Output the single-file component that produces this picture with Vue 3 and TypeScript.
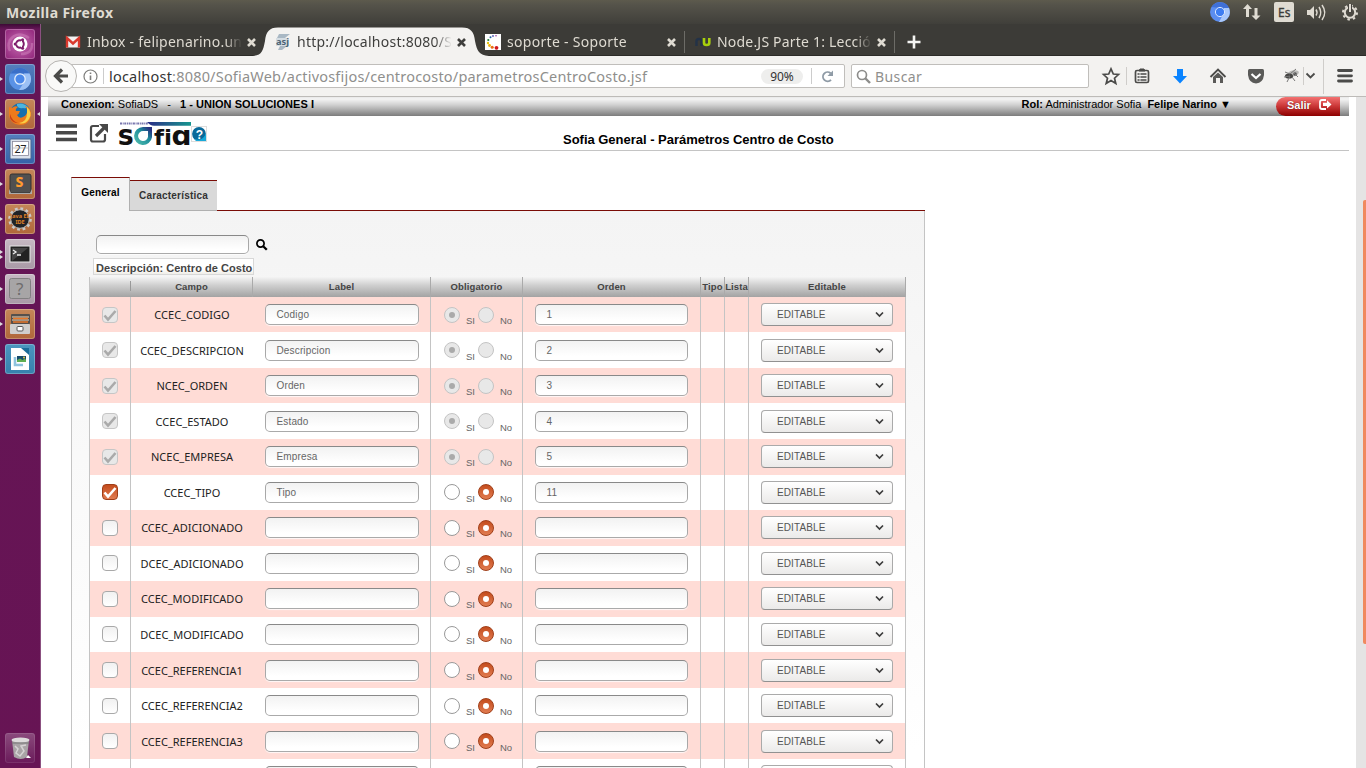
<script setup lang="ts">
interface Row {
  campo: string
  label: string
  orden: string
  state: 'locked' | 'on' | 'off'
}

const rows: Row[] = [
  { campo: 'CCEC_CODIGO', label: 'Codigo', orden: '1', state: 'locked' },
  { campo: 'CCEC_DESCRIPCION', label: 'Descripcion', orden: '2', state: 'locked' },
  { campo: 'NCEC_ORDEN', label: 'Orden', orden: '3', state: 'locked' },
  { campo: 'CCEC_ESTADO', label: 'Estado', orden: '4', state: 'locked' },
  { campo: 'NCEC_EMPRESA', label: 'Empresa', orden: '5', state: 'locked' },
  { campo: 'CCEC_TIPO', label: 'Tipo', orden: '11', state: 'on' },
  { campo: 'CCEC_ADICIONADO', label: '', orden: '', state: 'off' },
  { campo: 'DCEC_ADICIONADO', label: '', orden: '', state: 'off' },
  { campo: 'CCEC_MODIFICADO', label: '', orden: '', state: 'off' },
  { campo: 'DCEC_MODIFICADO', label: '', orden: '', state: 'off' },
  { campo: 'CCEC_REFERENCIA1', label: '', orden: '', state: 'off' },
  { campo: 'CCEC_REFERENCIA2', label: '', orden: '', state: 'off' },
  { campo: 'CCEC_REFERENCIA3', label: '', orden: '', state: 'off' },
  { campo: '', label: '', orden: '', state: 'off' },
]

const headers = ['', 'Campo', 'Label', 'Obligatorio', 'Orden', 'Tipo', 'Lista', 'Editable']

const launchers = [
  { id: 'home', tone: 'magenta', marks: 0 },
  { id: 'chromium', tone: 'blue', marks: 1 },
  { id: 'firefox', tone: 'orange', marks: 1 },
  { id: 'calendar', tone: 'blue', marks: 1 },
  { id: 'sublime', tone: 'orange', marks: 1 },
  { id: 'java', tone: 'orange', marks: 1 },
  { id: 'terminal', tone: 'grey', marks: 2 },
  { id: 'unknown', tone: 'grey', marks: 1 },
  { id: 'files', tone: 'orange', marks: 1 },
  { id: 'impress', tone: 'sky', marks: 1 },
  { id: 'trash', tone: 'clear', marks: 0 },
]
</script>

<template>
  <div class="desktop">
    <header class="panel">
      <span class="panel-title">Mozilla Firefox</span>
      <svg class="indicators" width="160" height="24" viewBox="1206 0 160 24">
        <circle cx="1220" cy="12" r="10" fill="#5b8def" />
        <path d="M1211.500 7A10 10 0 0 1 1229 8H1220Z" fill="#3f70d8" />
        <path d="M1229 8A10 10 0 0 1 1219 22L1224 13V8Z" fill="#a9c8fb" />
        <circle cx="1220" cy="12" r="4.600" fill="#3d7df2" stroke="#dbe8ff" stroke-width="1" />
        <path d="M1247.500 4L1252 9H1249V17H1246V9H1243ZM1256 20L1251.500 15.500H1254.500V8H1257.500V15.500H1260.500Z" fill="#dfdbd2" />
        <rect x="1274" y="2" width="20" height="20" rx="2" fill="#dfdbd2" />
        <text x="1278" y="16.500" font-size="12" textLength="12.500" fill="#3c3b37" stroke="#3c3b37" stroke-width=".3">Es</text>
        <path d="M1307 10H1310L1314 6V19L1310 15H1307Z" fill="#dfdbd2" />
        <path d="M1316 9.500Q1318 12.500 1316 15.500M1319 7Q1322.500 12.500 1319 18M1322 5Q1327.500 12.500 1322 20" fill="none" stroke="#dfdbd2" stroke-width="1.500" />
        <circle cx="1350" cy="12.500" r="5.200" fill="none" stroke="#dfdbd2" stroke-width="2" />
        <circle cx="1350" cy="12.500" r="7" fill="none" stroke="#dfdbd2" stroke-width="2" stroke-dasharray="2.500 3" />
        <path d="M1350 4V12.500" stroke="#45433e" stroke-width="4" />
        <path d="M1350 4V12" stroke="#dfdbd2" stroke-width="2" />
      </svg>
    </header>

    <div class="workspace">
      <nav class="launcher">
        <div v-for="item in launchers" :key="item.id" class="launch" :class="[item.id]">
          <span class="marks"><i v-for="m in item.marks" :key="m"></i></span>
          <svg width="30" height="30" viewBox="0 0 30 30" class="tile" :class="item.tone">
            <template v-if="item.id === 'home'">
              <path d="M4 12Q12 1 24 9M27 14Q28 25 16 25M5 22Q1 14 8 8" fill="none" stroke="#d88cc4" stroke-width="2.500" opacity=".45" />
              <circle cx="15" cy="15" r="7.500" fill="#fff" />
              <circle cx="15" cy="15" r="3.800" fill="none" stroke="#7d1c69" stroke-width="2" />
              <path d="M15 15L9.500 15M15 15L18 10M15 15L18 20" stroke="#fff" stroke-width="1" />
              <circle cx="10.200" cy="15" r="1.500" fill="#7d1c69" /><circle cx="17.600" cy="10.700" r="1.500" fill="#7d1c69" /><circle cx="17.600" cy="19.300" r="1.500" fill="#7d1c69" />
            </template>
            <template v-else-if="item.id === 'chromium'">
              <circle cx="15" cy="15" r="11" fill="#5a92e6" />
              <path d="M5.500 9.500A11 11 0 0 1 24.500 9.500H15Z" fill="#3a6fc8" />
              <path d="M24.500 9.500A11 11 0 0 1 14 26L20 17L19 9.500Z" fill="#9bc0f5" />
              <circle cx="15" cy="15" r="5.200" fill="#4a88ea" stroke="#e4eefc" stroke-width="1.300" />
            </template>
            <template v-else-if="item.id === 'firefox'">
              <circle cx="15.500" cy="14.500" r="10.500" fill="#176fae" />
              <path d="M12 5Q18 3 23 8Q21 10 18 9Q14 10 12 7Z" fill="#4bb5df" />
              <path d="M4 8L7 9Q10 6 13 8Q10 10 11 12H15Q14 15 12 16Q14 20 18 18Q23 16 22 10L20 7Q27 8 26 17Q24 26 15 26Q4 25 4 14Z" fill="#ee7a1c" />
              <path d="M22 8Q28 14 24 20Q20 26 14 24Q22 23 22 14Z" fill="#f9cf45" />
              <path d="M5 15Q7 22 13 24Q7 24 5 19Z" fill="#c94218" />
            </template>
            <template v-else-if="item.id === 'calendar'">
              <rect x="5" y="5" width="21" height="20" rx="1" fill="#dbe2ec" stroke="#49678f" />
              <rect x="7.500" y="7.500" width="16" height="14" fill="#fff" stroke="#889" stroke-width=".8" />
              <text x="9.500" y="18.500" font-size="11" textLength="12" fill="#222">27</text>
              <path d="M8 14H23" stroke="#999" stroke-width=".6" />
            </template>
            <template v-else-if="item.id === 'sublime'">
              <rect x="5" y="5" width="21" height="19" rx="2" fill="#505050" stroke="#333" />
              <path d="M4 20V25H27V20L25 24H6Z" fill="#aaa" />
              <text x="10.500" y="17.500" font-size="14" font-weight="800" fill="#ff9a2e">S</text>
            </template>
            <template v-else-if="item.id === 'java'">
              <circle cx="15" cy="15" r="10.300" fill="none" stroke="#c9c9c9" stroke-width="3" stroke-dasharray="2.700 2.700" />
              <circle cx="15" cy="15" r="9.300" fill="#202226" stroke="#bbb" stroke-width="1" />
              <text x="5.500" y="13.500" font-size="5.500" font-weight="700" textLength="19" lengthAdjust="spacingAndGlyphs" fill="#e08228">Java EE</text>
              <text x="10.500" y="19.500" font-size="5.500" font-weight="700" textLength="9" fill="#e08228">IDE</text>
            </template>
            <template v-else-if="item.id === 'terminal'">
              <rect x="5" y="7" width="20" height="16" fill="#222" stroke="#e8e8e8" />
              <path d="M7 22V9H23Z" fill="#444" />
              <path d="M8 11L11 13L8 15M12 16H16" fill="none" stroke="#eee" stroke-width="1.300" />
            </template>
            <template v-else-if="item.id === 'unknown'">
              <rect x="4.500" y="4.500" width="21" height="20" rx="2" fill="#a7a5a6" stroke="#818081" />
              <text x="11" y="20.500" font-size="17" fill="#6e6c6d">?</text>
            </template>
            <template v-else-if="item.id === 'files'">
              <rect x="6" y="5" width="19" height="10" rx="1" fill="#55504c" />
              <path d="M7 8H24M7 11H24" stroke="#f0d8bd" stroke-width="1" />
              <path d="M8 9.500H23M8 13H23" stroke="#e77729" stroke-width="1.600" />
              <rect x="5" y="15" width="20" height="10" rx="1" fill="#d0cfcd" />
              <rect x="12" y="17.500" width="6" height="4.500" rx="1" fill="#fff" stroke="#555" />
            </template>
            <template v-else-if="item.id === 'impress'">
              <path d="M6 4H18L24 10V26H6Z" fill="#fff" />
              <path d="M16 4H24V11Z" fill="#1b6c9a" />
              <path d="M10 13V21H18" fill="none" stroke="#8fc3de" stroke-width="2.600" />
              <rect x="12" y="12" width="9" height="6" fill="#164a6b" />
              <path d="M12 18V16L15 14.500L17.500 16L20 14.500L21 16V18Z" fill="#5fae52" /><circle cx="19" cy="13.500" r=".9" fill="#f9d649" />
            </template>
            <template v-else>
              <path d="M7 7L9 24Q16 28 22 24L24 7Z" fill="#a9a4a6" />
              <ellipse cx="15.500" cy="7" rx="9" ry="2.500" fill="#dedcdc" />
              <path d="M10 13L13 16L11 20L15 23L19 18L16 13L21 12" fill="none" stroke="#d6d3d4" stroke-width="1.500" />
              <path d="M7 10H24" stroke="#777" />
              <path d="M21 25L23 22L26 25Z" fill="#fff" />
            </template>
          </svg>
          <b v-if="item.id === 'firefox'" class="focus"></b>
        </div>
      </nav>

      <section class="browser">
        <div class="tabs">
          <div class="tab">
            <svg class="fav" width="16" height="16" viewBox="0 0 16 16">
              <rect x="1" y="2.500" width="14" height="11" fill="#f3f1f1" />
              <path d="M2 13.500V4L8 9.500L14 4V13.500" fill="none" stroke="#d9392e" stroke-width="2.400" />
            </svg>
            <span class="tab-title t1">Inbox - felipenarino.un</span>
            <svg class="close" width="9" height="9" viewBox="0 0 9 9"><path d="M1 1L8 8M8 1L1 8" /></svg>
          </div>
          <div class="tab active">
            <svg class="shape" width="236" height="29" viewBox="0 0 236 29">
              <path d="M0 29C9 28 10 24 12 14C13 5 16 .500 25 .500H209C218 .500 221 5 222 14C224 24 226 28 236 29Z" fill="#f3f2f0" />
            </svg>
            <svg class="fav" width="16" height="16" viewBox="0 0 16 16">
              <path d="M4 0H15L10 4H2ZM5 12H12L7 16H3Z" fill="#a9b8c4" />
              <rect x="1" y="4" width="13" height="8" fill="#d5dde3" />
              <text x="1" y="10.500" font-size="9" font-weight="700" textLength="13" lengthAdjust="spacingAndGlyphs" fill="#4c6475">asj</text>
            </svg>
            <span class="tab-title t2">http://localhost:8080/S</span>
            <svg class="close" width="9" height="9" viewBox="0 0 9 9"><path d="M1 1L8 8M8 1L1 8" /></svg>
          </div>
          <div class="tab ruled">
            <svg class="fav" width="16" height="16" viewBox="0 0 16 16">
              <rect width="16" height="16" fill="#fff" />
              <circle cx="11" cy="1.800" r=".8" fill="#93389c" /><circle cx="8" cy="2" r=".9" fill="#555bb5" /><circle cx="5.500" cy="3.300" r="1" fill="#2463a8" /><circle cx="3.300" cy="6" r="1.100" fill="#22803c" />
              <circle cx="3" cy="9" r="1.200" fill="#e3c313" /><circle cx="4.500" cy="11.500" r="1.400" fill="#f0b40c" /><circle cx="7.200" cy="13.300" r="1.500" fill="#e86b14" /><circle cx="11.500" cy="13.800" r="1.900" fill="#d0161c" />
            </svg>
            <span class="tab-title t3">soporte - Soporte</span>
            <svg class="close" width="9" height="9" viewBox="0 0 9 9"><path d="M1 1L8 8M8 1L1 8" /></svg>
          </div>
          <div class="tab ruled">
            <svg class="fav" width="16" height="16" viewBox="0 0 16 16">
              <path d="M1.500 12V7Q1.500 5 4 5Q6.500 5 6.500 7V12" fill="none" stroke="#233247" stroke-width="2.400" />
              <path d="M9 4V9Q9 11 11.500 11Q14.300 11 14.300 9V4" fill="none" stroke="#a8cf0c" stroke-width="2.600" />
            </svg>
            <span class="tab-title t4">Node.JS Parte 1: Lecció</span>
            <svg class="close" width="9" height="9" viewBox="0 0 9 9"><path d="M1 1L8 8M8 1L1 8" /></svg>
          </div>
          <svg class="plus" width="14" height="14" viewBox="0 0 14 14"><path d="M7 .500V13.500M.500 7H13.500" stroke="#f4f4f2" stroke-width="2.600" /></svg>
        </div>

        <div class="toolbar">
          <div class="back">
            <svg width="16" height="16" viewBox="0 0 16 16"><path d="M9 1.500L2.500 8L9 14.500M3 8H15" fill="none" stroke="#4b4b49" stroke-width="3.200" /></svg>
          </div>
          <div class="urlbar">
            <svg width="15" height="15" viewBox="0 0 15 15"><circle cx="7.500" cy="7.500" r="6.500" fill="none" stroke="#7d7d7b" stroke-width="1.200" /><path d="M7.500 6.500V11M7.500 3.500V5" stroke="#7d7d7b" stroke-width="1.600" /></svg>
            <i class="bar"></i>
            <span class="url"><b>localhost</b>:8080/SofiaWeb/activosfijos/centrocosto/parametrosCentroCosto.jsf</span>
            <span class="zoom">90%</span>
            <i class="bar grey"></i>
            <svg class="reload" width="13" height="13" viewBox="0 0 13 13"><path d="M10 9.800A4.600 4.600 0 1 1 9.600 3.200" fill="none" stroke="#8f9ba6" stroke-width="1.900" /><path d="M12 .500V6H6.500Z" fill="#8f9ba6" /></svg>
          </div>
          <div class="search">
            <svg width="15" height="15" viewBox="0 0 15 15"><circle cx="6" cy="6" r="4.500" fill="none" stroke="#8d8d8b" stroke-width="1.700" /><path d="M9 9L14 14" stroke="#8d8d8b" stroke-width="2.400" /></svg>
            <span>Buscar</span>
          </div>
          <svg class="tools" width="267" height="40" viewBox="1099 56 267 40" fill="none">
            <path d="M1111 68.800L1113.300 74L1118.500 74.500L1114.500 78.200L1115.800 83.500L1111 80.600L1106.200 83.500L1107.500 78.200L1103.500 74.500L1108.700 74Z" stroke="#4b4b49" stroke-width="1.700" />
            <path d="M1126.500 67V85M1303.500 67V85M1323.500 59V94" stroke="#cfcdca" />
            <rect x="1135.500" y="70.500" width="13" height="12" rx="1.500" stroke="#4b4b49" stroke-width="1.700" />
            <path d="M1139 71L1140 69H1144L1145 71Z" fill="#4b4b49" stroke="#4b4b49" />
            <path d="M1137.500 74H1146.500M1137.500 77H1146.500M1137.500 80H1146.500" stroke="#4b4b49" stroke-width="1.400" /><path d="M1140 73V82" stroke="#f3f2f0" stroke-width=".8" />
            <path d="M1177 69H1183V76H1187L1180 83.500L1173 76H1177Z" fill="#0a84ff" />
            <path d="M1210.500 77L1218 69.500L1225.500 77" stroke="#4b4b49" stroke-width="1.900" /><path d="M1213 77L1218 72.500L1223 77V83H1220V78H1216V83H1213Z" fill="#5a5a58" />
            <path d="M1249.500 69H1262.500Q1264 69 1264 70.500V75Q1263 83 1256 83.500Q1249 83 1248 75V70.500Q1248 69 1249.500 69Z" fill="#5a5a58" /><path d="M1251.500 74L1256 78L1260.500 74" stroke="#fff" stroke-width="2.200" />
            <ellipse cx="1293" cy="73.500" rx="6" ry="3" fill="#b9b9b7" transform="rotate(-14 1293 73.500)" /><ellipse cx="1289" cy="76" rx="4" ry="2.600" fill="#454543" /><circle cx="1295" cy="74" r="1.800" fill="#555" />
            <path d="M1285 72L1290 74L1296 69M1284 77L1290 76L1287 82M1292 77L1295 81M1294 73L1298 77" stroke="#777" />
            <path d="M1306.500 73.500L1310.500 77.500L1314.500 73.500" stroke="#4b4b49" stroke-width="1.800" />
            <path d="M1338.500 70.500H1351.500M1338.500 75.800H1351.500M1338.500 81H1351.500" stroke="#4b4b49" stroke-width="2.800" stroke-linecap="round" />
          </svg>
        </div>

        <div class="viewport">
          <main class="page">
            <div class="statusbar">
              <span><b>Conexion:</b> SofiaDS</span><span class="dash">-</span><b class="company">1 - UNION SOLUCIONES I</b>
              <span class="role"><b>Rol:</b> Administrador Sofia</span><b class="user">Felipe Narino ▼</b>
              <span class="logout">Salir
                <svg width="13" height="11" viewBox="0 0 13 11"><path d="M7 1H3Q1 1 1 3V8Q1 10 3 10H7" fill="none" stroke="#fff" stroke-width="1.800" /><path d="M4 3.800H8V1.300L12.500 5.500L8 9.500V7H4Z" fill="#fff" /></svg>
              </span>
            </div>
            <div class="titlebar">
              <svg class="brand" width="160" height="32" viewBox="54 118 160 32">
                <path d="M56 126H77M56 132.700H77M56 139.500H77" stroke="#484848" stroke-width="3.600" />
                <path d="M99 126H93Q91 126 91 128V139.500Q91 141.500 93 141.500H103Q105 141.500 105 139.500V134" fill="none" stroke="#484848" stroke-width="2.200" />
                <path d="M96 136L104 128" stroke="#484848" stroke-width="3.200" /><path d="M99 124H108V133Z" fill="#484848" />
                <defs><linearGradient id="band"><stop offset="0" stop-color="#2b2c86" /><stop offset="1" stop-color="#17978f" /></linearGradient>
                  <linearGradient id="drop" x1="0" y1="1" x2="1" y2="0"><stop offset="0" stop-color="#4bb8ab" /><stop offset=".6" stop-color="#1d8e9c" /><stop offset="1" stop-color="#28307f" /></linearGradient></defs>
                <path d="M147 122H191V125.700H154Q150 125.700 147 122Z" fill="url(#band)" />
                <path d="M120 123.500H148" stroke="#7876ae" stroke-width="2" stroke-dasharray="2 .7 1 .6" />
                <text class="logo" x="117.800" y="144.700" font-size="28" textLength="16" lengthAdjust="spacingAndGlyphs">s</text>
                <path d="M150 129V137A7 7 0 1 1 143 129Z" fill="none" stroke="url(#drop)" stroke-width="4" />
                <text class="logo" x="154" y="144.700" font-size="22" textLength="10" lengthAdjust="spacingAndGlyphs">f</text>
                <text class="logo" x="164" y="144.700" font-size="21" textLength="8" lengthAdjust="spacingAndGlyphs">i</text>
                <text class="logo" x="171.500" y="144.700" font-size="27" textLength="20" lengthAdjust="spacingAndGlyphs">ɑ</text>
                <rect x="191.500" y="126.500" width="15" height="15" fill="#fff" stroke="#ddd" />
                <circle cx="199" cy="134" r="6.900" fill="#08699a" /><path d="M194 139Q203 142 206 133V141H196Z" fill="#18a9d8" />
                <text x="195.800" y="138.500" font-size="12" font-weight="700" fill="#fff">?</text>
              </svg>
              <h1>Sofia General - Parámetros Centro de Costo</h1>
            </div>

            <div class="tabset">
              <div class="pf-tab sel">General</div>
              <div class="pf-tab">Característica</div>
              <div class="pf-rule"></div>
            </div>
            <div class="pf-panel">
              <div class="filter">
                <span class="field"></span>
                <svg width="12" height="12" viewBox="0 0 12 12"><circle cx="4.500" cy="4.500" r="3.600" fill="none" stroke="#000" stroke-width="1.700" /><path d="M7.200 7.200L10.800 10.800" stroke="#000" stroke-width="2.300" /></svg>
              </div>
              <div class="desc">Descripción: Centro de Costo</div>
              <div class="grid">
                <div class="line head">
                  <div v-for="(h, i) in headers" :key="i" class="th"><span>{{ h }}</span></div>
                </div>
                <div v-for="(row, i) in rows" :key="i" class="line row" :class="{ odd: i % 2 === 0 }">
                  <div class="td">
                    <span class="check" :class="row.state">
                      <svg v-if="row.state !== 'off'" width="14" height="14" viewBox="0 0 14 14"><path d="M1.500 7.500L5 11.500L12.500 3" fill="none" stroke="currentColor" stroke-width="2.600" /></svg>
                    </span>
                  </div>
                  <div class="td campo">{{ row.campo }}</div>
                  <div class="td"><span class="field">{{ row.label }}</span></div>
                  <div class="td choice">
                    <template v-if="row.campo">
                      <i class="radio" :class="{ locked: row.state === 'locked', dotted: row.state === 'locked' }"></i><span class="si">SI</span>
                      <i class="radio" :class="row.state === 'locked' ? 'locked' : 'picked'"></i><span class="no">No</span>
                    </template>
                  </div>
                  <div class="td orden"><span class="field">{{ row.orden }}</span></div>
                  <div class="td"></div>
                  <div class="td"></div>
                  <div class="td">
                    <span class="select"><template v-if="row.campo">EDITABLE</template>
                      <svg v-if="row.campo" width="9" height="7" viewBox="0 0 9 7"><path d="M1 1.500L4.500 5L8 1.500" fill="none" stroke="#3c3c3c" stroke-width="1.700" /></svg>
                    </span>
                  </div>
                </div>
              </div>
            </div>
          </main>
          <aside class="scroll"><i></i></aside>
        </div>
      </section>
    </div>
  </div>
</template>

<style>
html, body { margin: 0; overflow: hidden; }
</style>

<style scoped>
* { box-sizing: border-box; }
.desktop { width: 1366px; height: 768px; overflow: hidden; display: flex; flex-direction: column; background: #fff; font-family: "Noto Sans", sans-serif; white-space: nowrap; }
svg { display: block; flex: none; }
.panel { height: 24px; flex: none; display: flex; justify-content: space-between; align-items: center; background: linear-gradient(#5d5a4d, #55534a 20%, #403f3a); }
.panel-title { margin-left: 6px; color: #dfdbd2; font-weight: 700; font-size: 14px; letter-spacing: .4px; }
.workspace { flex: 1; min-height: 0; display: flex; }
.launcher { width: 41px; flex: none; background: linear-gradient(#3d0a35, #641556 5px, #671454); border-right: 1px solid #8b5080; padding-top: 5px; display: flex; flex-direction: column; gap: 5px; padding-bottom: 5px; }
.launch { height: 30px; display: flex; align-items: center; }
.launch.trash { margin-top: auto; }
.marks { width: 5px; flex: none; display: flex; flex-direction: column; gap: 1px; }
.marks i { width: 0; height: 0; border: 2px solid transparent; border-left: 3px solid #ddd; }
.focus { margin-left: 2px; width: 0; height: 0; border: 2px solid transparent; border-right: 3px solid #ddd; border-left: 0; }
.tile { border-radius: 3px; box-shadow: inset 0 0 0 1px rgba(255, 255, 255, .25); }
.magenta { background: radial-gradient(#c56ab0, #8f2379); }
.blue { background: linear-gradient(#557fbe, #3562a8); }
.orange { background: linear-gradient(#c48759, #b0673a); }
.grey { background: linear-gradient(#c6b9c3, #a99aa6); }
.sky { background: linear-gradient(#4c96bf, #3680ad); }
.tile.clear { background: linear-gradient(#8b4b7d, #6a1a5a); box-shadow: inset 0 0 0 1px rgba(255, 255, 255, .1); }
.browser { flex: 1; min-width: 0; display: flex; flex-direction: column; }
.tabs { height: 32px; flex: none; background: #3c3b37; display: flex; padding-left: 14px; border-bottom: 1px solid #2c2b28; }
.tab { width: 210px; position: relative; display: flex; align-items: center; padding: 5px 0 0 10px; color: #dfdbd2; }
.tab.ruled::after { content: ""; position: absolute; right: 0; top: 7px; height: 22px; width: 1px; background: #6d6c67; }
.tab.active { color: #3e3e3c; }
.shape { position: absolute; left: -12px; top: 3px; }
.fav { position: relative; }
.tab-title { position: relative; margin-left: 6px; width: 154px; overflow: hidden; font-size: 14px; line-height: 20px; mask-image: linear-gradient(90deg, #000 138px, transparent 155px); }
.close { position: relative; margin-left: 6px; }
.close path { stroke: currentColor; stroke-width: 2.600; fill: none; }
.t1 { letter-spacing: .23px; } .t2 { letter-spacing: .25px; } .t3 { letter-spacing: .3px; } .t4 { letter-spacing: .2px; }
.plus { margin: 11px 0 0 12px; }
.toolbar { height: 41px; flex: none; background: #f3f2f0; border-bottom: 1px solid #bdbbb8; display: flex; align-items: center; }
.back { width: 32px; height: 32px; margin-left: 4px; border-radius: 50%; border: 1px solid #b5b3b0; background: #f9f9f8; display: flex; align-items: center; justify-content: center; position: relative; flex: none; }
.urlbar { height: 24px; width: 784px; margin-left: -16px; padding-left: 21px; border: 1px solid #c0bebb; border-radius: 2px; background: #fff; display: flex; align-items: center; font-size: 14.500px; flex: none; }
.bar { width: 1px; height: 16px; background: #ccc; margin: 0 5px; }
.url { color: #8f8f8d; width: 647px; letter-spacing: .2px; }
.url b { color: #333; font-weight: 400; }
.zoom { width: 42px; height: 15px; border-radius: 8px; background: #eeeeed; color: #333; font-size: 12px; line-height: 15px; text-align: center; margin-left: 5px; }
.bar.grey { margin: 0 9px 0 8px; }
.search { width: 238px; height: 24px; margin-left: 6px; border: 1px solid #c0bebb; border-radius: 2px; background: #fff; color: #8f8f8d; font-size: 14px; display: flex; align-items: center; gap: 4px; padding-left: 4px; flex: none; letter-spacing: .4px; }
.tools { margin-left: 10px; }
.viewport { flex: 1; min-height: 0; display: flex; }
.page { flex: 1; min-width: 0; overflow: hidden; padding: 0 7px; font-family: "Liberation Sans", Arial, sans-serif; }
.scroll { width: 10px; background: #e5e4e4; display: flex; justify-content: flex-end; }
.scroll i { width: 3px; height: 444px; margin-top: 103px; background: #f0895f; border-radius: 2px 0 0 2px; }
.statusbar { height: 19px; background: linear-gradient(#e8e8e8, #f4f4f4 2px, #d0d0d0 8px, #7c7c7c); display: flex; padding-left: 13px; font-size: 11px; line-height: 15px; color: #000; }
.dash { margin: 0 9px; }
.company { letter-spacing: .04px; }
.role { margin-left: auto; }
.user { margin: 0 45px 0 6px; }
.logout { width: 64px; margin-right: 9px; height: 19px; border-radius: 10px 0 0 10px; background: linear-gradient(#f47272, #c83434 50%, #8d0000); color: #fff; font-weight: 700; font-size: 11px; line-height: 16px; padding-left: 11px; display: flex; gap: 8px; text-shadow: 0 0 1px #500; }
.logout svg { margin-top: 2px; }
.titlebar { height: 35px; border-bottom: 1px solid #c4c4c4; display: flex; }
.brand { margin: 2px 0 0 6px; }
.logo { font-family: "DejaVu Sans", sans-serif; font-weight: 700; fill: #111; }
h1 { margin: 15px 0 0 349px; font-size: 13px; line-height: 17px; font-weight: 700; color: #000; letter-spacing: -.02px; }
.tabset { display: flex; align-items: flex-end; height: 34px; width: 854px; margin: 26px 0 0 23px; }
.pf-tab { height: 31px; width: 87px; background: #d9d9d9; border-top: 1px solid #7a0c06; border-bottom: 1px solid #b0b0b0; font-size: 10px; font-weight: 700; line-height: 30px; text-align: center; color: #333; letter-spacing: .2px; }
.pf-tab.sel { height: 34px; width: 59px; background: #f4f4f4; color: #000; border: 1px solid #b0b0b0; border-top-color: #7a0c06; border-bottom: 0; line-height: 30px; }
.pf-rule { flex: 1; height: 1px; background: #7a0c06; }
.pf-panel { width: 854px; height: 600px; margin-left: 23px; border: solid #c4c4c4; border-width: 0 1px; background: linear-gradient(#f4f4f4, #fff 540px); padding: 24px 0 0 18px; }
.filter { display: flex; gap: 7px; align-items: center; padding-left: 6px; }
.field { display: block; width: 154px; height: 21px; border: 1px solid #a8a8a8; border-top-color: #898989; border-bottom-color: #aaa; border-radius: 5px; background: linear-gradient(#f2f2f2, #fff 80%); box-shadow: 0 1px 1px rgba(255, 255, 255, .8); font-size: 10px; line-height: 19px; padding-left: 11px; color: #666; letter-spacing: .15px; }
.orden .field { width: 153px; margin-right: 1px; }
.filter .field { width: 153px; height: 19px; }
.desc { width: 161px; height: 17px; margin: 4px 0 2px 3px; border: 1px solid #d8d8d8; background: linear-gradient(#fff 65%, #f0eee8); font-size: 11px; font-weight: 700; color: #444; line-height: 19px; padding-left: 2px; letter-spacing: .04px; }
.grid { width: 817px; border-left: 1px solid #c4c4c4; margin-left: -1px; }
.line { display: grid; grid-template-columns: 41px 122px 178px 92px 178px 24px 24px 157px; }
.head { height: 19.800px; background: linear-gradient(#f4f4f4, #d0d0d0 40%, #a3a3a3); }
.th { font-size: 9.500px; font-weight: 700; color: #444; text-align: center; line-height: 20px; border-right: 1px solid #aaa; letter-spacing: .1px; }
.th:first-child { border-right: 1px solid transparent; border-image: linear-gradient(transparent 25%, #999 25%, #999 70%, transparent 70%) 1; }
.row { height: 35.550px; background: #fff; }
.row.odd { background: #ffdcd6; }
.td { border-right: 1px solid #c4c4c4; display: flex; align-items: center; justify-content: center; }
.td:nth-child(2) { border-right: 0; }
.campo { font-family: "Noto Sans", sans-serif; font-size: 11px; color: #222; }
.check { width: 16px; height: 16px; border-radius: 4px; border: 1px solid #a9a9a9; background: linear-gradient(#f1f1f1, #fff); }
.check.locked { background: #e8e8e8; color: #aaa; border-color: #c6c6c6; }
.check.on { background: linear-gradient(#c44c1d, #e17c51); color: #fff; border-color: #a03e18; }
.choice { justify-content: flex-start; padding-left: 13px; font-size: 9.500px; color: #666; }
.radio { width: 16px; height: 16px; border-radius: 50%; border: 1px solid #999; background: #fff; flex: none; display: flex; align-items: center; justify-content: center; }
.radio.locked { background: #e8e8e8; border-color: #c4c4c4; }
.radio.dotted::after { content: ""; width: 6px; height: 6px; border-radius: 50%; background: #aaa; }
.radio.picked { background: linear-gradient(#c44c1d, #e17c51); border-color: #a03e18; }
.radio.picked::after { content: ""; width: 6px; height: 6px; border-radius: 50%; background: #fff; }
.si { width: 12px; margin: 12px 0 0 6px; }
.no { margin: 12px 0 0 6px; }
.select { width: 132px; height: 23px; border: 1px solid #aaa; border-bottom-color: #919191; border-radius: 4px; background: linear-gradient(#fff, #ebeae9); display: flex; align-items: center; justify-content: space-between; padding: 0 8px 0 15px; font-size: 10px; color: #555; letter-spacing: .1px; }
</style>
